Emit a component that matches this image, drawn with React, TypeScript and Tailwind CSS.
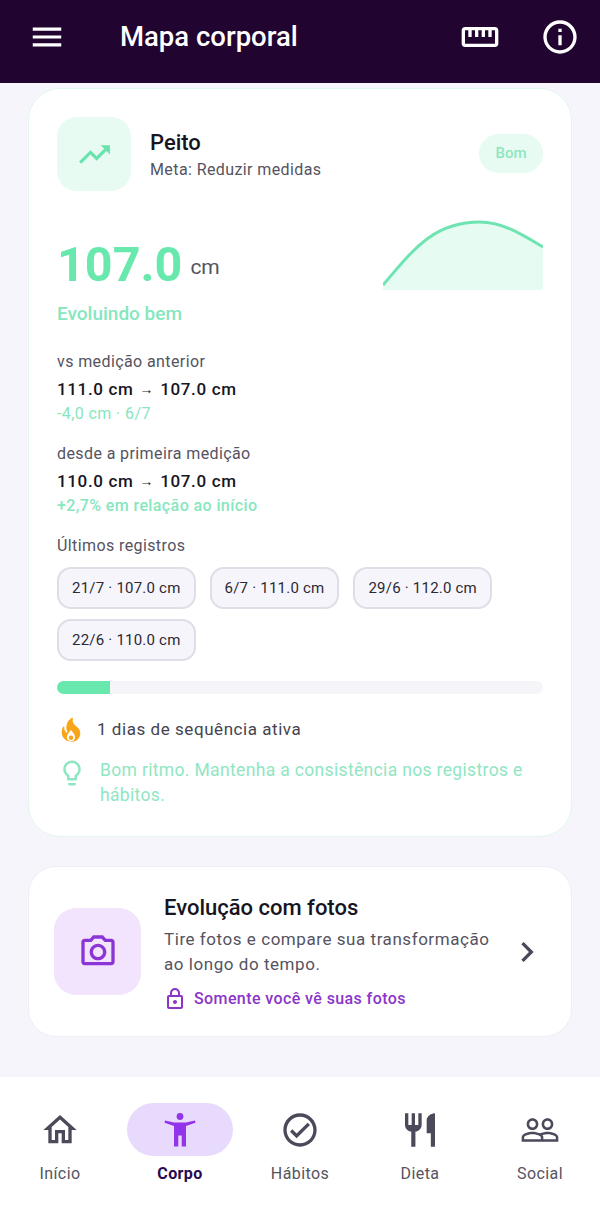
import React from 'react';
import {
  MdChevronRight,
  MdInfoOutline,
  MdMenu,
  MdOutlineCameraAlt,
  MdOutlineCheckCircle,
  MdOutlineHome,
  MdOutlineLightbulb,
  MdOutlineLock,
  MdPeopleOutline,
  MdRestaurant,
  MdStraighten,
  MdTrendingUp,
} from 'react-icons/md';

const records = ['21/7 · 107.0 cm', '6/7 · 111.0 cm', '29/6 · 112.0 cm', '22/6 · 110.0 cm'];

const BodyIcon: React.FC<{ size?: number }> = ({ size = 40 }) => (
  <svg width={size} height={size} viewBox="0 0 40 40" fill="currentColor">
    <circle cx="20" cy="6.5" r="3.4" />
    <path d="M5 10.5 14 12.5H26L35 10.5 35.5 12.8 26 16V36.5H21.7V25.5H18.3V36.5H14V16L4.5 12.8Z" />
  </svg>
);

const FlameIcon = () => (
  <svg width="28" height="28" viewBox="0 0 24 24">
    <path
      fill="#f9a51a"
      d="M19.48,12.35c-1.57-4.08-7.16-4.3-5.81-10.23c0.1-0.44-0.37-0.78-0.75-0.55C9.29,3.71,6.68,8,8.87,13.62c0.18,0.46-0.36,0.89-0.75,0.59c-1.81-1.37-2-3.34-1.84-4.75c0.06-0.52-0.62-0.77-0.91-0.34C4.69,10.16,4,11.84,4,14.37c0.38,5.6,5.11,7.32,6.81,7.54c2.43,0.31,5.06-0.14,6.95-1.87C19.84,18.11,20.6,15.03,19.48,12.35z"
    />
    <path fill="#fff" d="M12 12c-2 2.5-3.5 4-3.5 6.2 0 2 1.6 3.6 3.5 3.6s3.5-1.6 3.5-3.6C15.5 16 14 14.5 12 12z" />
    <circle cx="12" cy="18.6" r="1.9" fill="#f9a51a" />
  </svg>
);

const navItems = [
  { label: 'Início', icon: MdOutlineHome },
  { label: 'Corpo', icon: BodyIcon, active: true },
  { label: 'Hábitos', icon: MdOutlineCheckCircle },
  { label: 'Dieta', icon: MdRestaurant },
  { label: 'Social', icon: MdPeopleOutline },
];

const Comparison: React.FC<{ label: string; from: string; to: string; note: string; noteClass: string }> = ({
  label,
  from,
  to,
  note,
  noteClass,
}) => (
  <div>
    <p className="text-[16px] leading-[24px] tracking-[0.4px] text-[#55535f]">{label}</p>
    <p className="mt-[3px] flex items-center text-[17px] leading-[25px] font-medium tracking-[0.65px] text-[#17151f]">
      {from}
      <span className="mx-[6px] text-[14px] font-normal">→</span>
      {to}
    </p>
    <p className={`text-[16px] leading-[24px] tracking-[0.4px] ${noteClass}`}>{note}</p>
  </div>
);

export default function App() {
  return (
    <div className="flex h-[1207px] w-[600px] flex-col overflow-hidden bg-[#f7f5fc] font-['Roboto',sans-serif]">
      <header className="flex h-[83px] shrink-0 items-center bg-[#21042f] pb-[9px] text-white">
        <MdMenu size={38} className="ml-[28px]" />
        <h1 className="ml-[54px] flex-1 text-[27.5px] font-medium">Mapa corporal</h1>
        <MdStraighten size={40} className="mr-[40px]" />
        <MdInfoOutline size={40} className="mr-[20px]" />
      </header>

      <main className="mx-[28px] mt-[5px] flex flex-col">
        <section className="h-[749px] rounded-[32px] border border-[#dff7ec] bg-white px-[28px] pt-[28px]">
          <div className="flex items-start">
            <div className="flex h-[74px] w-[74px] items-center justify-center rounded-[20px] bg-[#e8fbf2]">
              <MdTrendingUp size={37} className="text-[#68e3ae]" />
            </div>
            <div className="ml-[19px] flex-1 pt-[12px]">
              <p className="text-[22px] leading-[28px] font-medium text-[#17151f]">Peito</p>
              <p className="mt-[1px] text-[16px] leading-[24px] tracking-[0.4px] text-[#55535f]">Meta: Reduzir medidas</p>
            </div>
            <span className="mt-[17px] flex h-[39px] w-[64px] items-center justify-center rounded-full bg-[#e8fbf2] text-[15px] font-medium text-[#8fe6c2]">
              Bom
            </span>
          </div>

          <div className="mt-[29px] flex items-start justify-between">
            <div className="pt-[15px]">
              <p className="flex items-center">
                <span className="text-[48.5px] leading-[60px] font-bold text-[#68e8ad]">107.0</span>
                <span className="mt-[5px] ml-[8px] text-[21px] text-[#55535f]">cm</span>
              </p>
              <p className="mt-[7px] text-[19px] leading-[24px] font-medium text-[#86e7be]">Evoluindo bem</p>
            </div>
            <svg width="160" height="70" viewBox="0 0 160 70" className="shrink-0">
              <path d="M0 65 C 30 30, 50 2, 97 2 C 120 2, 140 15, 160 27 L160 70 L0 70 Z" fill="#e6fbf2" />
              <path d="M0 65 C 30 30, 50 2, 97 2 C 120 2, 140 15, 160 27" fill="none" stroke="#6ee4b2" strokeWidth="3" />
            </svg>
          </div>

          <div className="mt-[24px] flex flex-col gap-[16px]">
            <Comparison
              label="vs medição anterior"
              from="111.0 cm"
              to="107.0 cm"
              note="-4,0 cm · 6/7"
              noteClass="text-[#86e7be]"
            />
            <Comparison
              label="desde a primeira medição"
              from="110.0 cm"
              to="107.0 cm"
              note="+2,7% em relação ao início"
              noteClass="font-medium text-[#86e7be]"
            />
          </div>

          <p className="mt-[16px] text-[16px] leading-[24px] tracking-[0.4px] text-[#55535f]">Últimos registros</p>
          <div className="mt-[9px] flex flex-wrap gap-x-[14px] gap-y-[10px]">
            {records.map((record) => (
              <span
                key={record}
                className="flex h-[42px] items-center rounded-[14px] border-2 border-[#e0dde6] bg-[#f7f5fc] px-[13px] text-[15px] tracking-[0.22px] text-[#2b2933]"
              >
                {record}
              </span>
            ))}
          </div>

          <div className="mt-[20px] h-[13px] overflow-hidden rounded-full bg-[#f5f4f9]">
            <div className="h-full w-[53px] bg-[#68e8ad]" />
          </div>

          <div className="mt-[22px] flex items-center">
            <FlameIcon />
            <p className="ml-[12px] text-[17px] tracking-[0.55px] text-[#45434f]">1 dias de sequência ativa</p>
          </div>
          <div className="mt-[14px] flex items-start">
            <MdOutlineLightbulb size={30} className="shrink-0 text-[#8fe6c2]" />
            <p className="ml-[13px] text-[17.5px] leading-[25px] tracking-[0.34px] text-[#8fe6c2]">
              Bom ritmo. Mantenha a consistência nos registros e hábitos.
            </p>
          </div>
        </section>

        <section className="mt-[29px] flex h-[171px] items-center rounded-[28px] border border-[#f0edf6] bg-white pl-[25px]">
          <div className="flex h-[87px] w-[87px] shrink-0 items-center justify-center rounded-[22px] bg-[#f2e4fd]">
            <MdOutlineCameraAlt size={40} className="text-[#8b35d6]" />
          </div>
          <div className="ml-[23px] w-[335px] pt-[2px]">
            <p className="text-[22px] leading-[28px] font-medium text-[#17151f]">Evolução com fotos</p>
            <p className="mt-[5px] text-[17px] leading-[25px] tracking-[0.55px] text-[#55535f]">
              Tire fotos e compare sua transformação ao longo do tempo.
            </p>
            <p className="mt-[10px] flex items-center text-[16px] font-medium tracking-[0.4px] text-[#8b35c9]">
              <MdOutlineLock size={24} className="-ml-[1px] mr-[7px]" />
              Somente você vê suas fotos
            </p>
          </div>
          <MdChevronRight size={40} className="ml-[8px] text-[#4b495a]" />
        </section>
      </main>

      <nav className="mt-auto grid h-[130px] shrink-0 grid-cols-5 bg-white pt-[26px]">
        {navItems.map(({ label, icon: Icon, active }) => (
          <div key={label} className="flex flex-col items-center">
            <div
              className={`flex h-[53px] w-[106px] items-center justify-center rounded-full ${
                active ? 'bg-[#e8dafc] text-[#9333ea]' : 'text-[#4b495a]'
              }`}
            >
              <Icon size={40} />
            </div>
            <span
              className={`mt-[8px] text-[16px] leading-[20px] tracking-[0.4px] ${
                active ? 'font-bold text-[#260a52]' : 'font-normal text-[#55535f]'
              }`}
            >
              {label}
            </span>
          </div>
        ))}
      </nav>
    </div>
  );
}
